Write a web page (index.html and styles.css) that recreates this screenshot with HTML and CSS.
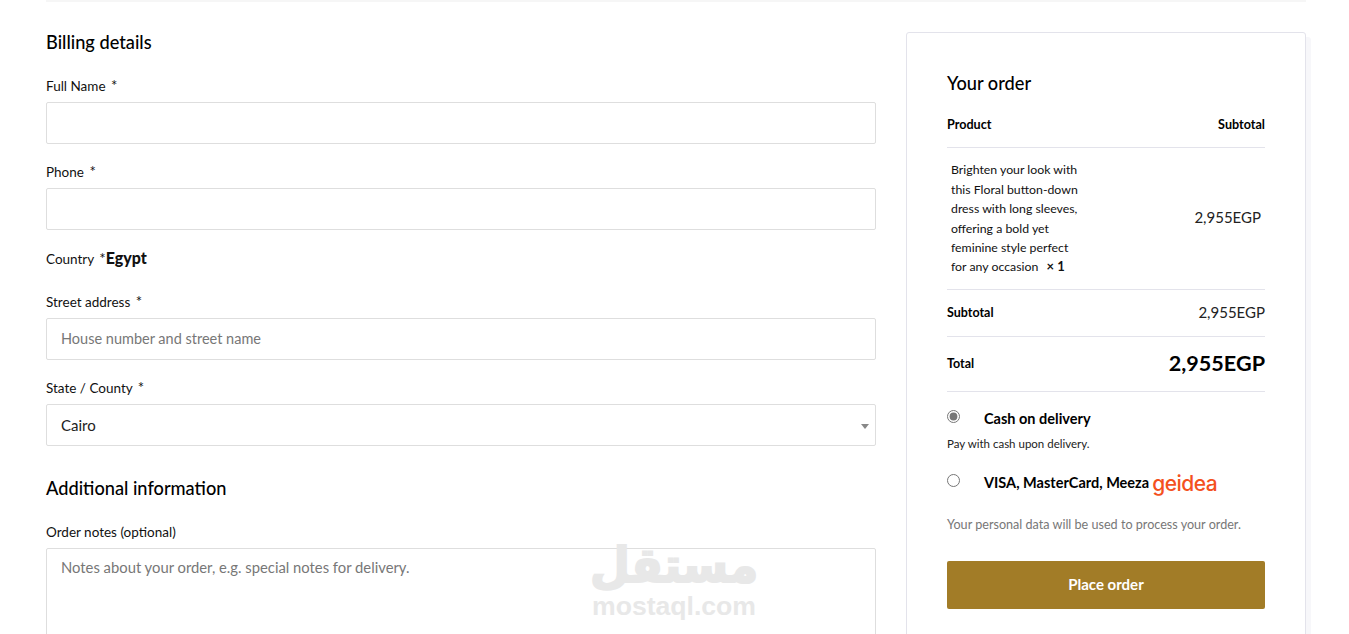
FILE: index.html
```html
<!DOCTYPE html>
<html lang="en">
<head>
<meta charset="utf-8">
<title>Checkout</title>
<link rel="stylesheet" href="styles.css">
</head>
<body>
<div class="page">
  <div class="strip"></div>
  <div class="columns">
    <form class="billing">
      <h3 class="heading">Billing details</h3>
      <div class="field">
        <label class="label">Full Name <span class="req">*</span></label>
        <input class="control" type="text">
      </div>
      <div class="field">
        <label class="label">Phone <span class="req">*</span></label>
        <input class="control" type="text">
      </div>
      <div class="field field-country">
        <label class="label">Country <span class="req">*</span><strong class="country">Egypt</strong></label>
      </div>
      <div class="field">
        <label class="label">Street address <span class="req">*</span></label>
        <input class="control" type="text" placeholder="House number and street name">
      </div>
      <div class="field">
        <label class="label">State / County <span class="req">*</span></label>
        <div class="select">
          <span>Cairo</span>
          <span class="caret"></span>
        </div>
      </div>
      <h3 class="heading heading-second">Additional information</h3>
      <div class="field">
        <label class="label">Order notes (optional)</label>
        <textarea class="control notes" placeholder="Notes about your order, e.g. special notes for delivery."></textarea>
      </div>
    </form>
    <aside class="order">
      <h3 class="order-title">Your order</h3>
      <div class="row row-head">
        <span>Product</span>
        <span>Subtotal</span>
      </div>
      <div class="row row-item">
        <div class="item-name">Brighten your look with this Floral button-down dress with long sleeves, offering a bold yet feminine style perfect for any occasion <strong class="qty">× 1</strong></div>
        <div class="item-price">2,955EGP</div>
      </div>
      <div class="row row-sub">
        <strong>Subtotal</strong>
        <span class="sub-price">2,955EGP</span>
      </div>
      <div class="row row-total">
        <strong>Total</strong>
        <strong class="total-price">2,955EGP</strong>
      </div>
      <div class="pay pay-first">
        <input class="radio" type="radio" name="pay" checked>
        <span class="pay-label">Cash on delivery</span>
      </div>
      <p class="pay-note">Pay with cash upon delivery.</p>
      <div class="pay pay-second">
        <input class="radio" type="radio" name="pay">
        <span class="pay-label">VISA, MasterCard, Meeza</span>
        <span class="geidea">geidea</span>
      </div>
      <p class="privacy">Your personal data will be used to process your order.</p>
      <button class="place" type="button">Place order</button>
    </aside>
  </div>
  <div class="watermark">
    <span class="wm-ar" lang="ar" dir="rtl">مستقل</span>
    <span class="wm-en">mostaql.com</span>
  </div>
</div>
</body>
</html>
```
FILE: styles.css
```css
* { box-sizing: border-box; }
html, body { margin: 0; height: 634px; overflow: hidden; background: #fff; }
body { font-family: "Lato", "Liberation Sans", sans-serif; color: #000; }
.page { position: relative; height: 634px; overflow: hidden; padding: 0 43px 0 46px; }
.strip { height: 2px; background: #f6f6f6; }
.columns { display: grid; grid-template-columns: 830px 400px; column-gap: 30px; }
.billing { padding-top: 28px; }
.heading { margin: 0 0 21px; font-size: 18.2px; line-height: 24px; font-weight: 500; }
.heading-second { margin-top: 30px; }
.field { margin-bottom: 17px; }
.field-country { margin-bottom: 21px; }
.label { display: block; font-size: 13.5px; line-height: 22px; margin-bottom: 5px; color: #111; }
.req { margin-left: 2px; font-size: 15px; line-height: 15px; }
.field-country .label { margin-bottom: 0; }
.country { font-weight: 900; font-size: 16px; }
.control { display: block; width: 100%; height: 42px; border: 1px solid #dedede; border-radius: 2px; padding: 0 14px 1px; font: 14.5px "Lato", sans-serif; background: #fff; outline: none; }
.control::placeholder { color: #777; opacity: 1; }
.notes { height: 120px; padding: 9px 14px; resize: none; font-size: 14.8px; }
.select { display: flex; align-items: center; justify-content: space-between; height: 42px; border: 1px solid #dedede; border-radius: 2px; padding: 0 6px 0 14px; font-size: 15px; color: #222; }
.caret { width: 0; height: 0; border-left: 4px solid transparent; border-right: 4px solid transparent; border-top: 5px solid #888; margin-top: 2px; }
.order { margin-top: 30px; height: 640px; border: 1px solid #e3e3eb; border-radius: 3px; padding: 39px 40px 0; box-shadow: 5px 5px 0 #f7f7fa; background: #fff; }
.order-title { margin: 0; font-size: 18.2px; line-height: 22px; font-weight: 500; }
.row { display: flex; justify-content: space-between; align-items: center; border-bottom: 1px solid #e3e3eb; font-size: 13px; }
.row strong { font-weight: 700; }
.row-head { margin-top: 20px; height: 34px; padding-bottom: 13px; font-weight: 700; font-size: 12.6px; }
.row-item { height: 142px; padding: 0 4px; }
.item-name { width: 132px; font-size: 12.3px; line-height: 19.4px; color: #111; }
.qty { font-weight: 700; font-size: 13px; margin-left: 5px; }
.item-price { font-size: 15px; color: #222; padding-bottom: 4px; }
.row-sub { height: 47px; font-size: 12.5px; padding-bottom: 2px; }
.sub-price { font-size: 15px; color: #222; }
.row-total { height: 55px; font-size: 12.5px; padding-bottom: 2px; }
.total-price { font-size: 21.6px; }
.pay { display: flex; align-items: center; height: 20px; }
.pay-first { margin-top: 16px; }
.radio { width: 13px; height: 13px; margin: 0 24px 4px 0; accent-color: #777; }
.pay-label { font-size: 14.5px; font-weight: 700; color: #000; }
.pay-note { margin: 7px 0 0; font-size: 11.5px; line-height: 18px; color: #222; }
.pay-second { margin-top: 19px; }
.geidea { margin: 3px 0 0 3px; font-size: 21px; line-height: 20px; font-weight: 500; color: #f4511e; font-family: "Inter", sans-serif; letter-spacing: -0.5px; }
.privacy { margin: 23px 0 0; font-size: 12.6px; line-height: 20px; color: #777; }
.place { display: block; width: 100%; height: 48px; margin-top: 26px; padding: 0 0 2px; border: 0; border-radius: 2px; background: #a27c27; color: #fff; font: 700 15px "Lato", sans-serif; }
.watermark { position: absolute; left: 592px; top: 541px; width: 164px; display: flex; flex-direction: column; align-items: center; color: #e8e8e8; pointer-events: none; }
.wm-ar { font-family: "DejaVu Sans", sans-serif; font-weight: 700; font-size: 46px; line-height: 50px; -webkit-text-stroke: 2px #e8e8e8; transform: scaleY(1.05); transform-origin: 50% 100%; }
.wm-en { font-family: "Liberation Sans", sans-serif; font-weight: 700; font-size: 26.6px; line-height: 30px; }
```
